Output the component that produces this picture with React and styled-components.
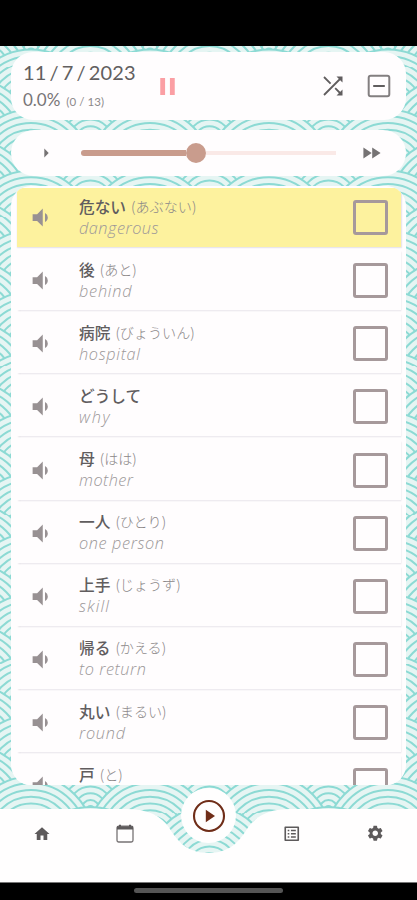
import styled, { createGlobalStyle } from "styled-components";
import {
  MdHome,
  MdListAlt,
  MdPause,
  MdSettings,
  MdVolumeDown,
} from "react-icons/md";

const words = [
  { word: "危ない", reading: "あぶない", meaning: "dangerous", width: 79.5 },
  { word: "後", reading: "あと", meaning: "behind", width: 52.5 },
  { word: "病院", reading: "びょういん", meaning: "hospital", width: 61 },
  { word: "どうして", meaning: "why", width: 30.5 },
  { word: "母", reading: "はは", meaning: "mother", width: 54 },
  { word: "一人", reading: "ひとり", meaning: "one person", width: 85 },
  { word: "上手", reading: "じょうず", meaning: "skill", width: 30 },
  { word: "帰る", reading: "かえる", meaning: "to return", width: 67 },
  { word: "丸い", reading: "まるい", meaning: "round", width: 46 },
  { word: "戸", reading: "と" },
];

// seigaiha wave tile, rows are painted from back to front
const rings = [62.5, 55.8, 49.1, 42.4, 35.7, 29, 22.3, 15.6, 8.9, 3];
const fan = (x, y) =>
  rings.map((r) => `<circle cx="${x}" cy="${y}" r="${r}"/>`).join("");
const tile = [-60.6, -30.3, 0, 30.3, 60.6, 90.9, 121.2]
  .map((y, i) =>
    (i % 2 ? [0, 119] : [-59.5, 59.5, 178.5]).map((x) => fan(x, y)).join("")
  )
  .join("");
const waves = `url("data:image/svg+xml,${encodeURIComponent(
  `<svg xmlns="http://www.w3.org/2000/svg" width="119" height="60.6" viewBox="0 0 119 60.6"><g fill="#e6f5f3" stroke="#8cdad4" stroke-width="2">${tile}</g></svg>`
)}")`;

const WordRow = ({ item, active }) => (
  <Row $active={active}>
    <Speaker>
      <MdVolumeDown size={27} />
    </Speaker>
    <Texts>
      <Japanese>
        {item.word}
        {item.reading && <Reading>({item.reading})</Reading>}
      </Japanese>
      <Meaning width={item.width || 0}>
        {item.meaning && (
          <text x="0" y="16" textLength={item.width} lengthAdjust="spacing">
            {item.meaning}
          </text>
        )}
      </Meaning>
    </Texts>
    <Checkbox />
  </Row>
);

export default function App() {
  return (
    <Screen>
      <GlobalStyle />
      <StatusBar />
      <Content>
        <Header>
          <Progress>
            <DateText>11 / 7 / 2023</DateText>
            <Percent>
              0.0% <Count>(0 / 13)</Count>
            </Percent>
          </Progress>
          <PauseButton>
            <MdPause size={29} />
          </PauseButton>
          <Actions>
            <svg width="20" height="20" viewBox="0 0 20 20">
              <path
                d="M1 19 17.5 2.5M1 1 7.6 7.6M12.2 12.2 17.5 17.5"
                fill="none"
                stroke="currentColor"
                strokeWidth="1.8"
              />
              <path
                d="M13.5 0.5H19.5V6.5zM19.5 13.5V19.5H13.5z"
                fill="currentColor"
              />
            </svg>
            <svg width="24" height="24" viewBox="0 0 24 24">
              <rect
                x="1.7"
                y="1.7"
                width="20.6"
                height="20.6"
                rx="2"
                fill="none"
                stroke="#837f80"
                strokeWidth="2"
              />
              <path d="M6.2 12H17.8" stroke="currentColor" strokeWidth="2" />
            </svg>
          </Actions>
        </Header>
        <SpeedBar>
          <svg width="5" height="10" viewBox="0 0 5 10">
            <path d="M0.3 0.5 4.7 5 0.3 9.5z" fill="currentColor" />
          </svg>
          <Slider>
            <Filled />
            <Thumb />
            <Rail />
          </Slider>
          <svg width="18" height="12" viewBox="0 0 18 12">
            <path
              d="M0.4 0.6 8.7 6 0.4 11.4zM9.2 0.6 17.6 6 9.2 11.4z"
              fill="currentColor"
            />
          </svg>
        </SpeedBar>
        <List>
          {words.map((item, index) => (
            <WordRow key={item.word} item={item} active={index === 0} />
          ))}
        </List>
      </Content>
      <Nav>
        <NavShape viewBox="0 0 417 73" preserveAspectRatio="none">
          <path
            d="M0 0H127C147 0 161 6 170 20C178 33 188 44 208.5 44C229 44 239 33 247 20C256 6 270 0 290 0H417V73H0z"
            fill="#fffefe"
          />
        </NavShape>
        <NavItem>
          <MdHome size={18} />
        </NavItem>
        <NavItem>
          <svg width="18" height="19" viewBox="0 0 18 19">
            <rect
              x="1"
              y="2.2"
              width="16"
              height="15.8"
              rx="1.7"
              fill="none"
              stroke="#777374"
              strokeWidth="1.3"
            />
            <path
              d="M1 2.2H17V5.4H1zM3 0.8H5V3H3zM13 0.8H15V3H13z"
              fill="currentColor"
            />
          </svg>
        </NavItem>
        <NavItem>
          <PlayButton>
            <svg width="34" height="34" viewBox="0 0 34 34">
              <circle
                cx="17"
                cy="17"
                r="15"
                fill="none"
                stroke="#6f2d18"
                strokeWidth="2.1"
              />
              <path d="M13.8 10.8 23 17 13.8 23.2z" fill="#6f2d18" />
            </svg>
          </PlayButton>
        </NavItem>
        <NavItem>
          <MdListAlt size={19.5} />
        </NavItem>
        <NavItem>
          <MdSettings size={18.5} />
        </NavItem>
      </Nav>
      <SystemBar>
        <HomeHandle />
      </SystemBar>
    </Screen>
  );
}

const GlobalStyle = createGlobalStyle`
  * {
    box-sizing: border-box;
  }
  body {
    margin: 0;
    overflow: hidden;
  }
  svg {
    display: block;
    flex-shrink: 0;
  }
`;
const Screen = styled.div`
  display: flex;
  flex-direction: column;
  width: 417px;
  height: 900px;
  background: #e6f5f3 ${waves} 30.5px 142px / 119px 60.6px;
  color: #5f5b5d;
  font-family: Lato, "Noto Sans CJK JP", sans-serif;
  overflow: hidden;
`;
const StatusBar = styled.div`
  height: 46px;
  background: #000;
`;
const Content = styled.main`
  display: flex;
  flex-direction: column;
  gap: 10px;
  height: 739px;
  padding: 6px 11px 0;
`;
const Panel = styled.section`
  display: flex;
  align-items: center;
  flex-shrink: 0;
  background: #fffdfe;
`;
const Header = styled(Panel)`
  height: 68px;
  padding: 0 15px 0 12px;
  border-radius: 22px;
`;
const Progress = styled.div`
  display: flex;
  flex-direction: column;
  width: 130px;
  padding-top: 4px;
`;
const DateText = styled.div`
  color: #625f60;
  font-size: 20px;
  line-height: 25px;
  letter-spacing: 0.1px;
  word-spacing: -2.1px;
  white-space: nowrap;
`;
const Percent = styled.div`
  color: #777476;
  font-size: 17px;
  line-height: 30px;
  letter-spacing: 0;
  white-space: nowrap;
`;
const Count = styled.span`
  margin-left: 1.5px;
  color: #8d898b;
  font-size: 11.5px;
  letter-spacing: 0.1px;
`;
const PauseButton = styled.div`
  display: flex;
  color: #fb9fa4;
`;
const Actions = styled.div`
  display: flex;
  align-items: center;
  gap: 24px;
  margin-left: auto;
  color: #605d5e;
`;
const SpeedBar = styled(Panel)`
  height: 46px;
  padding: 0 25px 0 33px;
  border-radius: 23px;
  color: #767374;
`;
const Slider = styled.div`
  display: flex;
  align-items: center;
  flex: 1;
  margin: 0 27px 0 32px;
`;
const Filled = styled.div`
  width: 105px;
  height: 6px;
  border-radius: 3px 0 0 3px;
  background: #c99c8d;
`;
const Thumb = styled.div`
  width: 20px;
  height: 20px;
  border-radius: 50%;
  background: #c99c8d;
`;
const Rail = styled.div`
  flex: 1;
  height: 4px;
  background: #fae9e7;
`;
const List = styled(Panel)`
  flex: 1;
  flex-direction: column;
  align-items: stretch;
  min-height: 0;
  padding: 2px 5px 0 6px;
  border-radius: 20px;
  overflow: hidden;
`;
const Row = styled.div`
  display: flex;
  align-items: center;
  flex-shrink: 0;
  height: 59px;
  margin-bottom: 4.15px;
  padding: 0 13px 0 10px;
  border-radius: ${({ $active }) => ($active ? "5px 5px 0 0" : "0")};
  background: ${({ $active }) => ($active ? "#fdf29e" : "#fffdfe")};
  box-shadow: 0.5px 1px 1.5px #e4e1e7;
`;
const Speaker = styled.div`
  display: flex;
  width: 52px;
  color: #989193;
`;
const Texts = styled.div`
  display: flex;
  flex: 1;
  flex-direction: column;
`;
const Japanese = styled.div`
  display: flex;
  align-items: center;
  gap: 5px;
  color: #615d5f;
  font-family: "Noto Sans CJK JP", sans-serif;
  font-size: 15.7px;
  font-weight: 500;
  line-height: 23px;
`;
const Reading = styled.span`
  color: #8b8788;
  font-size: 14.1px;
  font-weight: 300;
`;
const Meaning = styled.svg`
  height: 23px;
  overflow: visible;
  fill: #9c9899;
  font-family: "Open Sans", sans-serif;
  font-size: 16.3px;
  font-style: italic;
  font-weight: 300;
`;
const Checkbox = styled.div`
  width: 35px;
  height: 35px;
  border: 3px solid #a6999b;
  border-radius: 3px;
`;
const Nav = styled.nav`
  position: relative;
  display: flex;
  height: 73px;
  margin-top: 24px;
  color: #5d5a5b;
`;
const NavShape = styled.svg`
  position: absolute;
  inset: 0;
  width: 100%;
  height: 100%;
`;
const NavItem = styled.div`
  position: relative;
  display: flex;
  flex: 1;
  justify-content: center;
  align-items: center;
  height: 49px;
`;
const PlayButton = styled.div`
  position: absolute;
  top: -21px;
  display: flex;
  justify-content: center;
  align-items: center;
  width: 55px;
  height: 55px;
  border-radius: 50%;
  background: #fffefe;
`;
const SystemBar = styled.footer`
  display: flex;
  justify-content: center;
  height: 18px;
  padding-top: 5px;
  border-top: 1px solid #777;
  background: #000;
`;
const HomeHandle = styled.div`
  width: 149px;
  height: 5px;
  border-radius: 3px;
  background: #555;
`;
